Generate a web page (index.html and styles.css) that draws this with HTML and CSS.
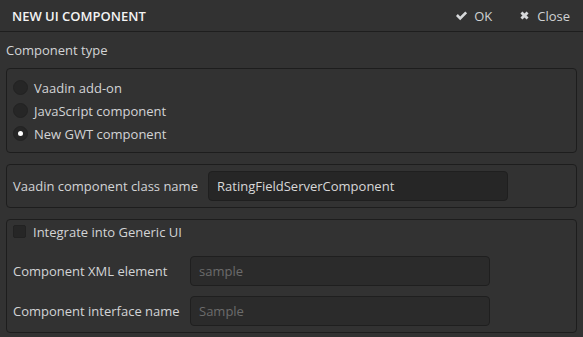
FILE: index.html
```html
<!DOCTYPE html>
<html>
<head>
<meta charset="utf-8">
<link rel="stylesheet" href="styles.css">
</head>
<body>
<div class="window">
  <div class="header">
    <div class="title">NEW UI COMPONENT</div>
    <div class="actions">
      <span class="action"><svg class="ico" viewBox="0 0 16 16"><path d="M1.2 8.6 L3.5 6.3 L6.4 9.2 L12.6 3 L14.9 5.3 L6.4 13.8 Z" fill="currentColor"/></svg>OK</span>
      <span class="action"><svg class="ico x" viewBox="0 0 16 16"><path d="M3 5.5 L5.5 3 L8 5.5 L10.5 3 L13 5.5 L10.5 8 L13 10.5 L10.5 13 L8 10.5 L5.5 13 L3 10.5 L5.5 8 Z" fill="currentColor"/></svg>Close</span>
    </div>
  </div>
  <div class="body">
    <div class="caption">Component type</div>
    <div class="panel radios">
      <div class="radio-row"><span class="radio"></span>Vaadin add-on</div>
      <div class="radio-row"><span class="radio"></span>JavaScript component</div>
      <div class="radio-row"><span class="radio checked"></span>New GWT component</div>
    </div>
    <div class="panel row-panel">
      <div class="field">
        <span class="label">Vaadin component class name</span>
        <div class="input wide">RatingFieldServerComponent</div>
      </div>
    </div>
    <div class="panel generic">
      <div class="check-row"><span class="checkbox"></span>Integrate into Generic UI</div>
      <div class="field">
        <span class="label w2">Component XML element</span>
        <div class="input narrow placeholder">sample</div>
      </div>
      <div class="field">
        <span class="label w2">Component interface name</span>
        <div class="input narrow placeholder">Sample</div>
      </div>
    </div>
  </div>
</div>
</body>
</html>
```
FILE: styles.css
```css
html, body {
  margin: 0;
  padding: 0;
  background: #323232;
  width: 583px;
  height: 337px;
  overflow: hidden;
}
body {
  font-family: "Open Sans", "Noto Sans", sans-serif;
  font-size: 13px;
  color: #d2d4d6;
}
.window {
  display: flex;
  flex-direction: column;
}
.header {
  height: 32px;
  box-sizing: border-box;
  border-bottom: 1px solid #1e1e1e;
  display: flex;
  align-items: center;
  justify-content: space-between;
  padding: 0 13px 0 12px;
}
.title {
  font-weight: 600;
  color: #f4f4f4;
  font-size: 13px;
}
.actions {
  display: flex;
  gap: 26px;
}
.action {
  display: flex;
  align-items: center;
  gap: 6px;
  color: #d0d2d4;
}
.ico {
  width: 13px;
  height: 13px;
  color: #d6d8da;
}
.body {
  padding: 0 6px;
  display: flex;
  flex-direction: column;
}
.caption {
  height: 36px;
  display: flex;
  align-items: center;
}
.panel {
  border: 1px solid #1d1d1d;
  border-radius: 4px;
  box-sizing: border-box;
}
.radios {
  height: 85px;
  padding: 7px 6px 0 6px;
  display: flex;
  flex-direction: column;
}
.radio-row {
  height: 23px;
  display: flex;
  align-items: center;
  gap: 6px;
}
.radio {
  width: 15px;
  height: 15px;
  border-radius: 50%;
  background: #262626;
  border: 1px solid #222;
  box-sizing: border-box;
  position: relative;
}
.radio.checked::after {
  content: "";
  position: absolute;
  left: 4px;
  top: 4px;
  width: 5px;
  height: 5px;
  border-radius: 50%;
  background: #fff;
}
.row-panel {
  margin-top: 11px;
  height: 44px;
  display: flex;
  align-items: center;
  padding: 0 6px;
}
.field {
  display: flex;
  align-items: center;
}
.label {
  width: 195px;
}
.label.w2 {
  width: 177px;
}
.input {
  height: 30px;
  box-sizing: border-box;
  background: #262626;
  border: 1px solid #1f1f1f;
  border-radius: 4px;
  display: flex;
  align-items: center;
  padding: 0 8px;
  color: #d8d8d8;
}
.input.wide {
  width: 300px;
}
.input.narrow {
  width: 300px;
  background: #2b2b2b;
}
.placeholder {
  color: #6c6c6c;
}
.generic {
  margin-top: 11px;
  height: 114px;
  padding: 1px 6px 0 6px;
  display: flex;
  flex-direction: column;
}
.check-row {
  height: 21px;
  display: flex;
  align-items: center;
  gap: 7px;
  margin-bottom: 14px;
}
.checkbox {
  width: 13px;
  height: 13px;
  border-radius: 2px;
  background: #262626;
  border: 1px solid #222;
  box-sizing: border-box;
}
.generic .field + .field {
  margin-top: 10px;
}
```
